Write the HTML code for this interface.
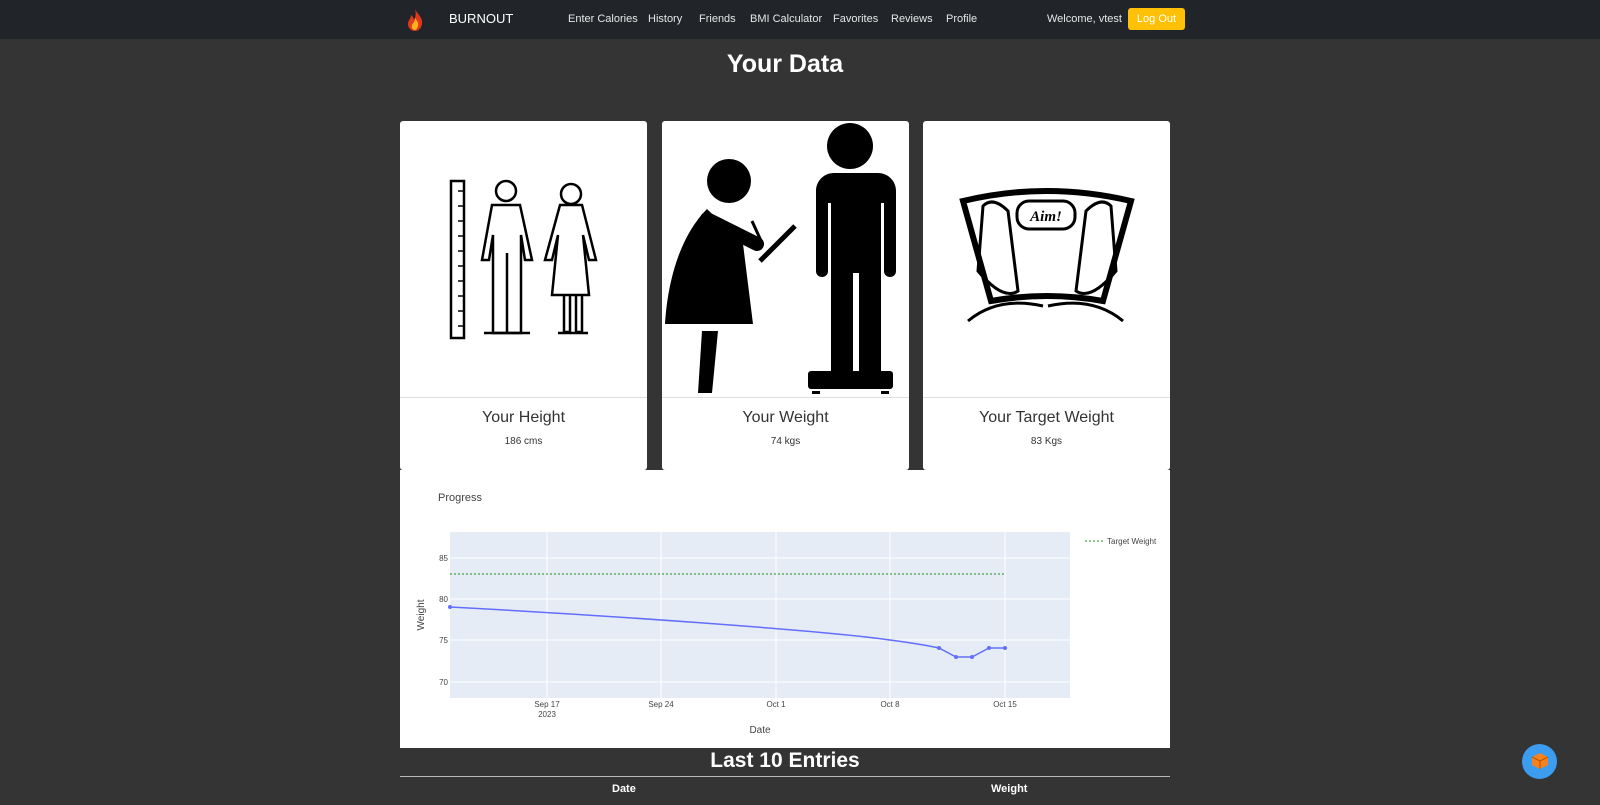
<!DOCTYPE html>
<html><head><meta charset="utf-8"><style>
*{box-sizing:border-box;margin:0;padding:0}
body{width:1600px;height:805px;overflow:hidden;background:#343434;font-family:"Liberation Sans",sans-serif;position:relative}
.nav{position:absolute;left:0;top:0;width:1600px;height:39px;background:#212529;color:#e6e6e6;font-size:11px}
.nav span{position:absolute;top:13px}
.btn{position:absolute;left:1128px;top:8px;width:57px;height:22px;background:#ffc107;border-radius:3px;color:#fff;font-size:11px;text-align:center;line-height:22px}
h1{position:absolute;top:50px;width:1570px;text-align:center;color:#fff;font-size:25px}
.card{position:absolute;top:121px;width:247px;height:349px;background:#fff;border-radius:3px}
.card .img{height:277px;border-bottom:1px solid #ddd;overflow:hidden}
.card h3{text-align:center;font-weight:normal;font-size:16px;color:#333;margin-top:11px}
.card p{text-align:center;font-size:10px;color:#333;margin-top:9px}
.chart{position:absolute;left:400px;top:470px;width:770px;height:278px;background:#fff}
</style></head><body>
<div class="nav">
<svg style="position:absolute;left:406px;top:9px" width="18" height="22" viewBox="0 0 18 22"><path d="M9 0C11 5 17 8 16 15C15 20 12 22 9 22C5 22 2 19 2 15C2 11 5 10 5 6C7 8 8 9 8 11C10 8 10 4 9 0Z" fill="#e0391b"/><path d="M9 9C11 12 13 14 12 17C11 20 10 21 9 21C7 21 5 19 6 16C7 14 9 13 9 9Z" fill="#ffb21a"/></svg>
<span style="left:449px;top:11px;font-size:13px;color:#fff">BURNOUT</span>
<span style="left:568px">Enter Calories</span><span style="left:648px">History</span><span style="left:699px">Friends</span><span style="left:750px">BMI Calculator</span><span style="left:833px">Favorites</span><span style="left:891px">Reviews</span><span style="left:946px">Profile</span>
<span style="left:1047px">Welcome, vtest</span>
<div class="btn">Log Out</div>
</div>
<h1>Your Data</h1>
<div class="card" style="left:400px"><div class="img"><svg width="247" height="277" viewBox="0 0 247 277" fill="none" stroke="#000" stroke-width="2.5">
<rect x="51" y="60" width="13" height="157"/><g stroke-width="1.5"><path d="M58 70h6M58 85h6M58 100h6M58 115h6M58 130h6M58 145h6M58 160h6M58 175h6M58 190h6M58 205h6"/></g>
<circle cx="106" cy="70" r="10"/><path d="M92 84h28l12 55h-7l-4-25v98h-14v-80v80h-14v-98l-4 25h-7z"/><path d="M84 212h46"/>
<circle cx="171" cy="73" r="10"/><path d="M160 84h22l14 55h-7l-6-25l6 60h-37l6-60l-6 25h-7z"/><path d="M164 175v36h6v-36M176 175v36h6v-36M158 212h30"/>
</svg></div><h3>Your Height</h3><p>186 cms</p></div>
<div class="card" style="left:662px"><div class="img"><svg width="247" height="277" viewBox="0 0 247 277">
<circle cx="188" cy="25" r="23"/><path d="M160 52h56c10 0 18 8 18 18v80c0 8-12 8-12 0v-68h-3v170h-22v-100h-6v100h-22v-170h-3v68c0 8-12 8-12 0v-80c0-10 8-18 18-18z"/><rect x="146" y="250" width="85" height="18" rx="3"/><rect x="150" y="270" width="8" height="3"/><rect x="219" y="270" width="8" height="3"/>
<circle cx="67" cy="60" r="22"/><path d="M45 88c-30 30-40 80-42 115h88l-10-80z"/><path d="M40 210l16 0l-6 62h-14z"/><path d="M45 98l50 25" stroke="#000" stroke-width="14" stroke-linecap="round"/><path d="M90 100l10 22" stroke="#000" stroke-width="3"/><path d="M98 140l35-35" stroke="#000" stroke-width="5"/>
</svg></div><h3>Your Weight</h3><p>74 kgs</p></div>
<div class="card" style="left:923px"><div class="img"><svg width="247" height="277" viewBox="0 0 247 277" fill="none" stroke="#000" stroke-width="3">
<path d="M40 80q83-20 168 0l-28 100q-56-10-112 0z" stroke-width="6"/><rect x="94" y="80" width="58" height="28" rx="12"/><text x="123" y="100" font-size="15" font-style="italic" font-weight="bold" fill="#000" stroke="none" text-anchor="middle" font-family="Liberation Serif">Aim!</text>
<path d="M60 85q10-10 25 5l10 80q-15 10-40-20zM188 85q-10-10-25 5l-10 80q15 10 40-20z"/><path d="M45 200q30-25 75-15M200 200q-30-25-75-15"/>
</svg></div><h3>Your Target Weight</h3><p>83 Kgs</p></div>
<div class="chart"><svg width="770" height="278" font-family="Liberation Sans" font-size="8" fill="#444">
<text x="38" y="31" font-size="11">Progress</text>
<rect x="50" y="62" width="620" height="166" fill="#e5ecf6"/>
<g stroke="#fff" stroke-width="1"><path d="M147 62v166M261 62v166M376 62v166M490 62v166M605 62v166M50 88h620M50 129h620M50 170h620M50 212h620"/></g>
<path d="M50 104h555" stroke="#1a8c1a" stroke-dasharray="2,2" stroke-width="1"/>
<path d="M50 137C200 145 420 160 490 170C520 174 530 176 539 178L556 187L572 187L589 178L605 178" stroke="#636efa" stroke-width="1.5" fill="none"/>
<g fill="#636efa"><circle cx="50" cy="137" r="2"/><circle cx="539" cy="178" r="2"/><circle cx="556" cy="187" r="2"/><circle cx="572" cy="187" r="2"/><circle cx="589" cy="178" r="2"/><circle cx="605" cy="178" r="2"/></g>
<g text-anchor="end"><text x="48" y="91">85</text><text x="48" y="132">80</text><text x="48" y="173">75</text><text x="48" y="215">70</text></g>
<g text-anchor="middle"><text x="147" y="237">Sep 17</text><text x="147" y="247">2023</text><text x="261" y="237">Sep 24</text><text x="376" y="237">Oct 1</text><text x="490" y="237">Oct 8</text><text x="605" y="237">Oct 15</text><text x="360" y="263" font-size="10">Date</text></g>
<text transform="translate(24 145) rotate(-90)" text-anchor="middle" font-size="10">Weight</text>
<path d="M685 71h18" stroke="#1a8c1a" stroke-dasharray="2,2"/><text x="707" y="74">Target Weight</text>
</svg></div>
<div style="position:absolute;left:400px;top:749px;width:770px;text-align:center;color:#fff;font-size:21px;font-weight:bold">Last 10 Entries</div>
<div style="position:absolute;left:400px;top:776px;width:770px;height:1px;background:#bbb"></div>
<div style="position:absolute;left:612px;top:783px;color:#fff;font-size:11px;font-weight:bold">Date</div>
<div style="position:absolute;left:991px;top:783px;color:#fff;font-size:11px;font-weight:bold">Weight</div>
<div style="position:absolute;left:1522px;top:744px;width:35px;height:35px;border-radius:50%;background:#3b9cf0"></div>
<svg style="position:absolute;left:1530px;top:751px" width="20" height="20" viewBox="0 0 20 20"><path d="M10 2l8 4v8l-8 4l-8-4v-8z" fill="#f5821f"/><path d="M2 6l8 4l8-4M10 10v8" stroke="#b35400" fill="none"/></svg>
</body></html>
